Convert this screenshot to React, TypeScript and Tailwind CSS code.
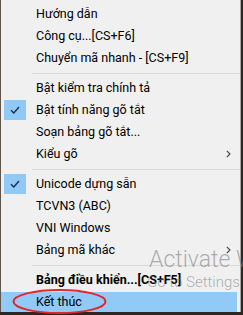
import type { ReactNode } from "react";

type Item =
  | { kind: "sep" }
  | {
      kind: "item";
      label: string;
      checked?: boolean;
      sub?: boolean;
      bold?: boolean;
      active?: boolean;
    };

const items: Item[] = [
  { kind: "item", label: "Hướng dẫn" },
  { kind: "item", label: "Công cụ...[CS+F6]" },
  { kind: "item", label: "Chuyển mã nhanh - [CS+F9]" },
  { kind: "sep" },
  { kind: "item", label: "Bật kiểm tra chính tả" },
  { kind: "item", label: "Bật tính năng gõ tắt", checked: true },
  { kind: "item", label: "Soạn bảng gõ tắt..." },
  { kind: "item", label: "Kiểu gõ", sub: true },
  { kind: "sep" },
  { kind: "item", label: "Unicode dựng sẵn", checked: true },
  { kind: "item", label: "TCVN3 (ABC)" },
  { kind: "item", label: "VNI Windows" },
  { kind: "item", label: "Bảng mã khác", sub: true },
  { kind: "sep" },
  { kind: "item", label: "Bảng điều khiển...[CS+F5]", bold: true },
  { kind: "item", label: "Kết thúc", active: true },
];

function CheckMark() {
  return (
    <svg width="10" height="8" viewBox="0 0 10 8">
      <path d="M1 4.2 L3.8 7 L9 1" fill="none" stroke="#1c2f4d" strokeWidth="1.4" />
    </svg>
  );
}

function Chevron() {
  return (
    <svg width="5" height="8" viewBox="0 0 5 8">
      <path d="M0.8 0.8 L4 4 L0.8 7.2" fill="none" stroke="#404040" strokeWidth="1.1" />
    </svg>
  );
}

function Row({ item }: { item: Extract<Item, { kind: "item" }> }) {
  let check: ReactNode = null;
  if (item.checked) {
    check = (
      <div className="w-[22px] h-[20px] bg-[#90c8f6] flex items-center justify-center">
        <CheckMark />
      </div>
    );
  }
  return (
    <div className="h-[22px] py-[1px]">
      <div
        className={
          "h-[20px] flex items-center mr-[3px] " +
          (item.active ? "bg-[#91c9f7]" : "")
        }
      >
        <div className="w-[35px] pl-[3px] shrink-0">{check}</div>
        <span
          className={
            "flex-1 text-[12.5px] leading-none text-black whitespace-nowrap " +
            (item.bold ? "font-bold" : "")
          }
        >
          {item.label}
        </span>
        {item.sub ? (
          <div className="w-[11px] flex items-center">
            <Chevron />
          </div>
        ) : null}
      </div>
    </div>
  );
}

export default function App() {
  return (
    <div className="w-[243px] h-[315px] bg-[#2c2724] relative overflow-hidden font-['Roboto',sans-serif]">
      <div className="w-[241px] h-[312px] bg-[#f0f0f0] border-l border-r border-l-[#5e554e] border-r-[#a7a7a7] pt-[3px]">
        {items.map((item, i) =>
          item.kind === "sep" ? (
            <div key={i} className="h-[8px] flex items-center">
              <div className="ml-[31px] flex-1 h-px bg-[#d7d7d7]" />
            </div>
          ) : (
            <Row key={i} item={item} />
          ),
        )}
      </div>

      <div className="absolute left-[149px] top-[248px] text-[23px] leading-none font-light text-[#7d7d7d]/60 whitespace-nowrap pointer-events-none">
        Activate Windows
      </div>
      <div className="absolute left-[147px] top-[275px] text-[15px] leading-none font-light text-[#7d7d7d]/60 whitespace-nowrap pointer-events-none">
        Go to Settings to activate Windows.
      </div>

      <svg className="absolute left-[11px] top-[288px]" width="97" height="27" viewBox="0 0 97 27">
        <ellipse cx="48.5" cy="13.5" rx="46" ry="11.5" fill="none" stroke="#e3262b" strokeWidth="2" />
      </svg>
    </div>
  );
}
